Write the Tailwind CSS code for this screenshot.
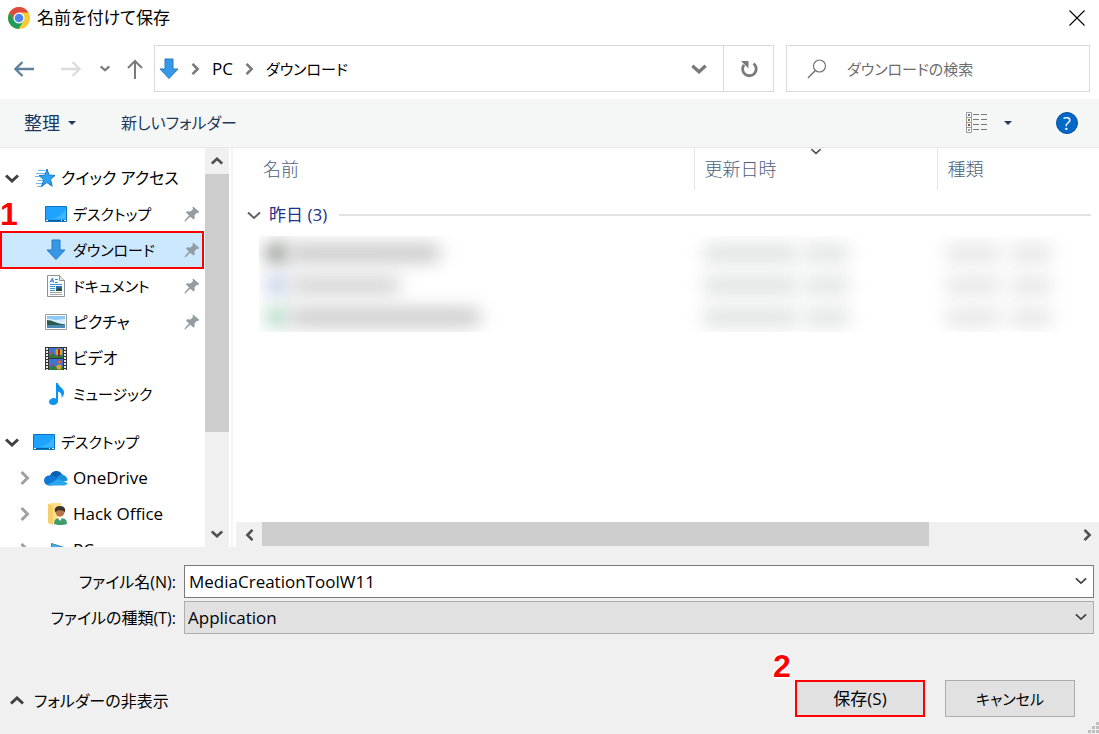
<!DOCTYPE html>
<html lang="ja">
<head>
    <meta charset="UTF-8">
    <meta name="viewport" content="width=device-width, initial-scale=1.0">
    <title>名前を付けて保存</title>
    <!-- Tailwind CSS CDN -->
    <script src="https://cdn.jsdelivr.net/npm/@tailwindcss/browser@4"></script>
    <style>
        body, button, input, select {
            font-family: 'Open Sans', 'Noto Sans CJK JP', sans-serif;
            font-feature-settings: 'palt';
        }
    </style>
</head>
<body class="h-screen flex flex-col overflow-hidden bg-white text-black text-[17px] leading-6">
    <!-- Shared icons -->
    <svg class="hidden">
        <symbol id="down-arrow" viewBox="0 0 20 22">
            <path d="M6 1h8v10h5l-9 9.500L1 11h5z" fill="#3898e8" stroke="#2579c4"/>
        </symbol>
        <symbol id="desktop" viewBox="0 0 24 18">
            <path d="M1.500 1.500h21v15h-21z" fill="#1ea4ff" stroke="#0a76bf"/>
            <path d="M22 3v11H8C15 12 20 8 22 3z" fill="#3fb4ff"/>
            <path d="M2 15.500h20" stroke="#0a5d9b"/>
            <path d="M2 15.500h2m13 0h1m2 0h2" stroke="#fff"/>
        </symbol>
        <symbol id="pin" viewBox="0 0 16 16">
            <path d="M9 .5L15.500 6l-1.500 1-1-.3-2.500 2.600.2 3.200-1.200 1L6.200 10.800 1.500 15.200.5 15.500.9 14 5 9.500 2 6.500l1-1.200 3.500.2L9 3 8.500 1.500z" fill="#929ca3"/>
        </symbol>
        <symbol id="chevron-down" viewBox="0 0 14 9">
            <path d="M1 1.500l6 5.500 6-5.500" fill="none" stroke="currentColor"/>
        </symbol>
        <symbol id="chevron-right" viewBox="0 0 10 14">
            <path d="M1.500 1l6 6-6 6" fill="none" stroke="currentColor"/>
        </symbol>
    </svg>

    <!-- Title bar -->
    <header class="flex items-center h-9 pl-2 pr-3">
        <svg class="size-[22px]" viewBox="0 0 22 22">
            <circle cx="11" cy="11" r="11" fill="#fbc934"/>
            <path d="M1.500 5.500A11 11 0 0 1 20.500 5.500H11L6.200 13.700z" fill="#dd4b3e"/>
            <path d="M1.500 5.500A11 11 0 0 0 10.500 22L15.800 13.700H6.200z" fill="#1c9d59"/>
            <circle cx="11" cy="11" r="5.500" fill="#fff"/>
            <circle cx="11" cy="11" r="4.300" fill="#4a86f0"/>
        </svg>
        <h1 class="ml-[7px] flex-1">名前を付けて保存</h1>
        <button class="p-[2px]" aria-label="閉じる">
            <svg class="size-4" viewBox="0 0 16 16"><path d="M.5.5l15 15M15.500.5l-15 15" stroke="#000" stroke-width="1.100"/></svg>
        </button>
    </header>

    <!-- Address bar -->
    <nav class="flex items-center mt-[9px] mb-[7px] pl-[14px] pr-[9px] h-[47px]">
        <button aria-label="戻る"><svg class="w-5 h-4" viewBox="0 0 20 16"><path d="M20 8H2M8.500 1L1.500 8l7 7" fill="none" stroke="#5f7f9f" stroke-width="2.300"/></svg></button>
        <button class="ml-[27px]" aria-label="進む"><svg class="w-5 h-4" viewBox="0 0 20 16"><path d="M0 8h18M11.500 1l7 7-7 7" fill="none" stroke="#dcdcdc" stroke-width="2.300"/></svg></button>
        <button class="ml-[19px] text-[#7a7a7a]" aria-label="最近表示した場所"><svg class="w-[10px] h-[7px] stroke-3" viewBox="0 0 14 9"><use href="#chevron-down" width="14" height="9"/></svg></button>
        <button class="ml-[17px]" aria-label="上へ"><svg class="w-4 h-5" viewBox="0 0 16 20"><path d="M8 20V2M1 9l7-7 7 7" fill="none" stroke="#7a7a7a" stroke-width="2"/></svg></button>
        <div class="ml-[11px] flex flex-1 items-center h-full border border-[#d9d9d9]">
            <svg class="ml-1 w-5 h-[22px]"><use href="#down-arrow"/></svg>
            <svg class="ml-3 w-[9px] h-3 text-[#7a7a7a] stroke-3"><use href="#chevron-right"/></svg>
            <a href="#" class="ml-3">PC</a>
            <svg class="ml-3 w-[9px] h-3 text-[#7a7a7a] stroke-3"><use href="#chevron-right"/></svg>
            <a href="#" class="ml-3 flex-1 text-[15px]">ダウンロード</a>
            <button class="mr-4 text-[#7a7a7a]" aria-label="履歴"><svg class="w-4 h-[10px] stroke-3"><use href="#chevron-down"/></svg></button>
            <button class="flex items-center justify-center w-[50px] h-full border-l border-[#d9d9d9]" aria-label="更新">
                <svg class="size-[18px]" viewBox="0 0 18 18">
                    <path d="M13.500 3.500A6.800 6.800 0 1 1 4 4.800" fill="none" stroke="#7a7a7a" stroke-width="2.800"/>
                    <path d="M1 1h7.500v7.500z" fill="#7a7a7a"/>
                </svg>
            </button>
        </div>
        <label class="ml-3 flex items-center w-[304px] h-full border border-[#d9d9d9]">
            <svg class="ml-5 size-5" viewBox="0 0 20 20"><circle cx="12.500" cy="7" r="6" fill="none" stroke="#6d6d6d" stroke-width="1.100"/><path d="M8.300 11.500L1 19" stroke="#6d6d6d" stroke-width="1.300"/></svg>
            <input type="search" placeholder="ダウンロードの検索" aria-label="ダウンロードの検索" class="ml-5 w-56 text-[15px] outline-none placeholder:text-[#6d6d6d]">
        </label>
    </nav>

    <!-- Toolbar -->
    <div class="flex items-center h-[49px] pl-6 pr-[21px] bg-[#f5f7f7] border-b border-[#e5e9ea] text-[#1e395b]">
        <button class="flex items-center gap-2 text-lg leading-6">整理
            <svg class="w-2 h-1" viewBox="0 0 8 4"><path d="M0 0h8L4 4z" fill="#1e395b"/></svg>
        </button>
        <button class="ml-[45px] text-base">新しいフォルダー</button>
        <button class="ml-auto flex items-center gap-4" aria-label="表示方法">
            <svg class="w-[22px] h-[22px]" viewBox="0 0 22 22">
                <path d="M.5.5h5v20h-5zM.5 5.500h5M.5 10.500h5M.5 15.500h5" fill="#fff" stroke="#9a9a9a"/>
                <path d="M2 3h2" stroke="#3f7f8f" stroke-width="2"/><path d="M2 8h2" stroke="#857d1f" stroke-width="2"/>
                <path d="M2 13h2" stroke="#b04020" stroke-width="2"/><path d="M2 18h2" stroke="#8ba0b8" stroke-width="2"/>
                <path d="M7 2.500h6m2 0h6M7 7.500h6m2 0h6M7 12.500h6m2 0h6M7 17.500h6m2 0h6" stroke="#77797a"/>
            </svg>
            <svg class="w-2 h-1" viewBox="0 0 8 4"><path d="M0 0h8L4 4z" fill="#1e395b"/></svg>
        </button>
        <button class="ml-11 size-[22px] rounded-full border border-[#00509f] bg-[#0068c8] text-lg text-white leading-5" aria-label="ヘルプ">?</button>
    </div>

    <main class="flex flex-1 min-h-0">
        <!-- Folder tree -->
        <aside class="flex w-[229px] shrink-0 overflow-hidden">
            <div class="w-[205px] pt-3 text-base [&_a]:flex [&_a]:items-center [&_a]:h-9 [&_a]:whitespace-nowrap">
                <a href="#" class="pl-[5px]">
                    <svg class="w-[14px] h-[9px] text-[#404040] stroke-3"><use href="#chevron-down"/></svg>
                    <svg class="ml-4 mr-1 w-[22px] h-5" viewBox="0 0 22 20">
                        <path d="M3 2.500h7M1 5.500h9M0 8.500h6M3 12.500h5M1 15.500h6M2 18.500h4" stroke="#6db9ea"/>
                        <path d="M12 1l2 6 6 .5-4.500 4 1.700 6.700-5.400-3.700-5.500 4.300 2.500-7L4 7.500l6-.3z" fill="#2ba3f5" stroke="#1479c9"/>
                    </svg>
                    クイック アクセス
                </a>
                <a href="#" class="relative pl-11">
                    <span class="absolute left-0 top-0 font-['Liberation_Sans'] text-[32px] leading-9 font-bold text-[#ff0000] [text-shadow:1px_1px_1px_#fff,-1px_-1px_1px_#fff,2px_0_1px_#fff]">1</span>
                    <svg class="mr-[5px] w-6 h-[18px]"><use href="#desktop"/></svg>
                    <span class="flex-1 text-[15px]">デスクトップ</span>
                    <svg class="mr-[5px] size-4"><use href="#pin"/></svg>
                </a>
                <a href="#" class="relative pl-11 mr-px bg-[#cce8ff]">
                    <span class="absolute inset-x-0 -inset-y-px border-2 border-[#ff0000]"></span>
                    <svg class="ml-[2px] mr-[7px] w-5 h-[22px]"><use href="#down-arrow"/></svg>
                    <span class="flex-1 text-[15px]">ダウンロード</span>
                    <svg class="mr-1 size-4"><use href="#pin"/></svg>
                </a>
                <a href="#" class="pl-11">
                    <svg class="ml-[3px] mr-2 w-[18px] h-[22px]" viewBox="0 0 18 22">
                        <path d="M.5.500h12l5 5v16H.5z" fill="#fff" stroke="#8b8f92"/>
                        <path d="M12.500.5v5h5" fill="#e6e6e6" stroke="#8b8f92"/>
                        <path d="M3 7.500L5.500 3 6.500 7.500M4 6h2.500" stroke="#1e78c8" fill="none"/>
                        <path d="M8 4.500h3M8 7.500h3M3 9.500h12M3 11.500h5M3 13.500h5M3 15.500h5" stroke="#3c93d8"/>
                        <path d="M3 17.500h12M3 19.500h12" stroke="#a2a6a8"/>
                        <path d="M9 11h6v5H9z" fill="#2d6da5"/><path d="M9 15l3-2 3 1v2H9z" fill="#2d4b3d"/>
                    </svg>
                    <span class="flex-1 text-[15px]">ドキュメント</span>
                    <svg class="mr-[5px] size-4"><use href="#pin"/></svg>
                </a>
                <a href="#" class="pl-11">
                    <svg class="ml-px mr-[6px] w-[22px] h-4" viewBox="0 0 22 16">
                        <path d="M.5.5h21v15H.5z" fill="#fff" stroke="#9a9da0"/>
                        <path d="M2 2h18v12H2z" fill="#8cc9f5"/>
                        <path d="M2 5c4-1 6 1 9 1s5-1 9-1v5H2z" fill="#d9eefb"/>
                        <path d="M2 6c5 0 8 3 18 4.500v.5H2z" fill="#2d5a4a"/>
                        <path d="M2 11h18v3H2z" fill="#4b8ab5"/>
                    </svg>
                    <span class="flex-1">ピクチャ</span>
                    <svg class="mr-[5px] size-4"><use href="#pin"/></svg>
                </a>
                <a href="#" class="pl-11">
                    <svg class="ml-px mr-[6px] w-[22px] h-[23px]" viewBox="0 0 22 23">
                        <path d="M0 0h22v23H0z" fill="#333"/>
                        <path d="M2 1v22M20 1v22" stroke="#e8e8e8" stroke-width="2" stroke-dasharray="2 1"/>
                        <path d="M4 1h14v10H4zM4 12h14v11H4z" fill="#3f74d8"/>
                        <path d="M4 8l4-1 3 2 7-1v3H4zM4 20l5-1 3 2 6-1v3H4z" fill="#347a3a"/>
                        <circle cx="14" cy="5" r="3.500" fill="#e0a51c"/><path d="M14 2v8" stroke="#8a2a1a" stroke-width="2"/>
                        <path d="M5 6h4M12 14h5l-2.500 3z" stroke="#c8452d" fill="#e0a51c"/>
                        <circle cx="14" cy="20" r="2.500" fill="#e0a51c"/><path d="M6 18h3" stroke="#c8452d" stroke-width="2"/>
                    </svg>
                    ビデオ
                </a>
                <a href="#" class="pl-11">
                    <svg class="ml-[5px] mr-2 w-4 h-[22px]" viewBox="0 0 16 22">
                        <path d="M7 0h2c.5 4 6.500 5.500 6 10-.2 2-1 3.500-2.500 5 .8-3.500-.5-5.500-3.500-6.500V18c0 2.500-2.500 4-5 4-2 0-4-1-4-3s2.500-4 5-4c1 0 1.500.2 2 .5z" fill="#0a93f0"/>
                    </svg>
                    <span class="text-[15px]">ミュージック</span>
                </a>
                <a href="#" class="mt-3 pl-[5px]">
                    <svg class="w-[14px] h-[9px] text-[#404040] stroke-3"><use href="#chevron-down"/></svg>
                    <svg class="ml-[13px] mr-[5px] w-6 h-[18px]"><use href="#desktop"/></svg>
                    <span class="text-[15px]">デスクトップ</span>
                </a>
                <a href="#" class="pl-5 text-[17px]">
                    <svg class="w-[10px] h-[14px] text-[#a0a0a0] stroke-3"><use href="#chevron-right"/></svg>
                    <svg class="ml-[14px] mr-[5px] w-6 h-4" viewBox="0 0 24 16">
                        <path d="M6 6a6.500 6.500 0 0 1 12.300-1L15 10z" fill="#0a5fb5"/>
                        <path d="M5 15.500A5 5 0 0 1 5 5.500c3-.7 5 .5 9 3.500l-6 6.500z" fill="#0f78d4"/>
                        <path d="M12 9c2-4 4-4.500 6.500-4.500 3 1 5 3 5 6L18 12z" fill="#1490df"/>
                        <path d="M3 15l11-6 9.500 4c-.5 1.500-1.500 2.500-3.500 2.500H5z" fill="#28a8ea"/>
                    </svg>
                    OneDrive
                </a>
                <a href="#" class="pl-5 text-[17px]">
                    <svg class="w-[10px] h-[14px] text-[#a0a0a0] stroke-3"><use href="#chevron-right"/></svg>
                    <svg class="ml-[18px] mr-[5px] w-5 h-[22px]" viewBox="0 0 20 22">
                        <path d="M0 1l4-1h9v20H4l-4-1z" fill="#ffe08a"/>
                        <path d="M0 1l5 1.500V22l-5-2z" fill="#f5cf6a"/>
                        <path d="M6 21c0-4 2-6 6-6 5 0 7 2 7 6-4 1.500-9 1.500-13 0z" fill="#3f9a6c"/>
                        <path d="M9 14l3 4 3-4z" fill="#f0f4ee"/>
                        <circle cx="12" cy="9" r="4.500" fill="#b5764c"/>
                        <path d="M7 9c-1-4 1-6 5-6s6 2 4.800 6.500C16 7 13 8 11 7z" fill="#3b3431"/>
                    </svg>
                    Hack Office
                </a>
                <a href="#" class="pl-5 text-[17px]">
                    <svg class="w-[10px] h-[14px] text-[#a0a0a0] stroke-3"><use href="#chevron-right"/></svg>
                    <svg class="ml-[21px] mr-[5px] w-[17px] h-[22px]" viewBox="0 0 17 22"><path d="M.5 4.500l16 5v9l-16-2z" fill="#3fb4f5" stroke="#4a7fa5"/></svg>
                    PC
                </a>
            </div>
            <!-- Vertical scrollbar -->
            <div class="flex flex-col w-6 bg-[#f0f0f0] text-[#505050]">
                <button class="flex items-center justify-center h-[26px]" aria-label="上へスクロール"><svg class="w-3 h-2 rotate-180 stroke-3"><use href="#chevron-down"/></svg></button>
                <div class="h-[258px] bg-[#cdcdcd]"></div>
                <button class="mt-auto flex items-center justify-center h-[26px]" aria-label="下へスクロール"><svg class="w-3 h-2 stroke-3"><use href="#chevron-down"/></svg></button>
            </div>
        </aside>

        <!-- File list -->
        <section class="flex flex-col flex-1 min-w-0 ml-[2px] border-l-2 border-[#f5f5f5]">
            <table class="w-full table-fixed text-left">
                <thead class="text-lg leading-6 text-[#4c607a]">
                    <tr class="h-[42px]">
                        <th class="w-[461px] pl-[30px] font-light border-r border-[#e5e5e5]">名前</th>
                        <th class="relative w-[243px] pl-[10px] font-light border-r border-[#e5e5e5]">更新日時
                            <svg class="absolute top-0 left-[115px] w-3 h-[7px] stroke-2 text-[#505050]"><use href="#chevron-down"/></svg>
                        </th>
                        <th class="pl-[10px] font-light">種類</th>
                    </tr>
                </thead>
                <tbody>
                    <tr class="h-[46px]">
                        <td colspan="3" class="pt-1 pl-[14px] pr-2 text-[#1e3287]">
                            <div class="flex items-center">
                                <svg class="w-[14px] h-[9px] text-[#606060] stroke-2"><use href="#chevron-down"/></svg>
                                <span class="ml-2">昨日 (3)</span>
                                <span class="ml-3 flex-1 h-[2px] bg-[#e2e2e2]"></span>
                            </div>
                        </td>
                    </tr>
                </tbody>
                <!-- Redacted entries -->
                <tbody class="[clip-path:inset(0_0_0_26px)] [&_tr]:h-8 [&_td]:pt-[2px] [&_td]:align-middle [&_span]:block [&_span]:h-[18px] [&_span]:rounded-lg [&_span]:blur-[9px]">
                    <tr>
                        <td class="pl-8"><div class="flex"><span class="w-6 bg-[#858985]"></span><span class="w-38 bg-[#c6c6c6]"></span></div></td>
                        <td class="pl-2"><div class="flex gap-1"><span class="w-24 bg-[#dfe0e0]"></span><span class="w-12 bg-[#e1e2e2]"></span></div></td>
                        <td class="pl-2"><div class="flex gap-2"><span class="w-14 bg-[#e5e5e5]"></span><span class="w-11 bg-[#e5e5e5]"></span></div></td>
                    </tr>
                    <tr>
                        <td class="pl-8"><div class="flex"><span class="w-6 bg-[#bccbe6]"></span><span class="w-28 bg-[#d2d2d2]"></span></div></td>
                        <td class="pl-2"><div class="flex gap-1"><span class="w-24 bg-[#dfe0e0]"></span><span class="w-12 bg-[#e1e2e2]"></span></div></td>
                        <td class="pl-2"><div class="flex gap-2"><span class="w-14 bg-[#e5e5e5]"></span><span class="w-11 bg-[#e5e5e5]"></span></div></td>
                    </tr>
                    <tr>
                        <td class="pl-8"><div class="flex"><span class="w-6 bg-[#a8d6be]"></span><span class="w-48 bg-[#c8c8c8]"></span></div></td>
                        <td class="pl-2"><div class="flex gap-1"><span class="w-24 bg-[#dfe0e0]"></span><span class="w-12 bg-[#e1e2e2]"></span></div></td>
                        <td class="pl-2"><div class="flex gap-2"><span class="w-14 bg-[#e5e5e5]"></span><span class="w-11 bg-[#e5e5e5]"></span></div></td>
                    </tr>
                </tbody>
            </table>
            <!-- Horizontal scrollbar -->
            <div class="mt-auto ml-[3px] flex h-[25px] bg-[#f0f0f0] text-[#505050]">
                <button class="flex items-center justify-center w-[26px]" aria-label="左へスクロール"><svg class="w-[9px] h-3 rotate-180 stroke-3"><use href="#chevron-right"/></svg></button>
                <div class="flex-1"><div class="w-[82%] h-6 bg-[#cdcdcd]"></div></div>
                <button class="flex items-center justify-center w-6" aria-label="右へスクロール"><svg class="w-[9px] h-3 stroke-3"><use href="#chevron-right"/></svg></button>
            </div>
        </section>
    </main>

    <!-- File name, type and actions -->
    <footer class="relative bg-[#f0f0f0] pt-[18px] pb-[17px]">
        <div class="grid grid-cols-[176px_1fr] items-center gap-x-2 gap-y-[3px] pr-[5px]">
            <label for="file-name" class="text-right text-base">ファイル名(N):</label>
            <div class="relative">
                <input id="file-name" type="text" value="MediaCreationToolW11" class="block w-full h-[33px] pl-1 pr-8 bg-white border border-[#7a7a7a]">
                <svg class="absolute right-[7px] top-3 w-3 h-2 stroke-2 text-[#404040]"><use href="#chevron-down"/></svg>
            </div>
            <label for="file-type" class="text-right text-base">ファイルの種類(T):</label>
            <div class="relative">
                <select id="file-type" class="block appearance-none w-full h-[33px] pl-[3px] pr-8 bg-[#e1e1e1] border border-[#adadad]">
                    <option>Application</option>
                </select>
                <svg class="absolute right-[7px] top-3 w-3 h-2 stroke-2 text-[#404040]"><use href="#chevron-down"/></svg>
            </div>
        </div>
        <div class="mt-[46px] flex items-center pl-[10px] pr-6">
            <button class="mt-1 flex items-center gap-[10px] text-base">
                <svg class="w-[14px] h-[9px] rotate-180 text-[#404040] stroke-3"><use href="#chevron-down"/></svg>
                フォルダーの非表示
            </button>
            <div class="relative ml-auto">
                <span class="absolute -left-[22px] -top-8 font-['Liberation_Sans'] text-[32px] leading-9 font-bold text-[#ff0000] [text-shadow:2px_0_1px_#fff,-2px_0_1px_#fff,0_2px_1px_#fff,0_-2px_1px_#fff]">2</span>
                <button class="block w-[130px] h-[37px] bg-[#e1e1e1] border-2 border-[#ff0000]">保存(S)</button>
            </div>
            <button class="ml-5 w-[130px] h-[37px] bg-[#e1e1e1] border border-[#adadad] text-[15px]">キャンセル</button>
        </div>
        <svg class="absolute right-0 bottom-0 size-3" viewBox="0 0 12 12"><path d="M9 0h3v3H9zM5 4h3v3H5zM9 4h3v3H9zM1 8h3v3H1zM5 8h3v3H5zM9 8h3v3H9z" fill="#bfbfbf"/></svg>
    </footer>
</body>
</html>
